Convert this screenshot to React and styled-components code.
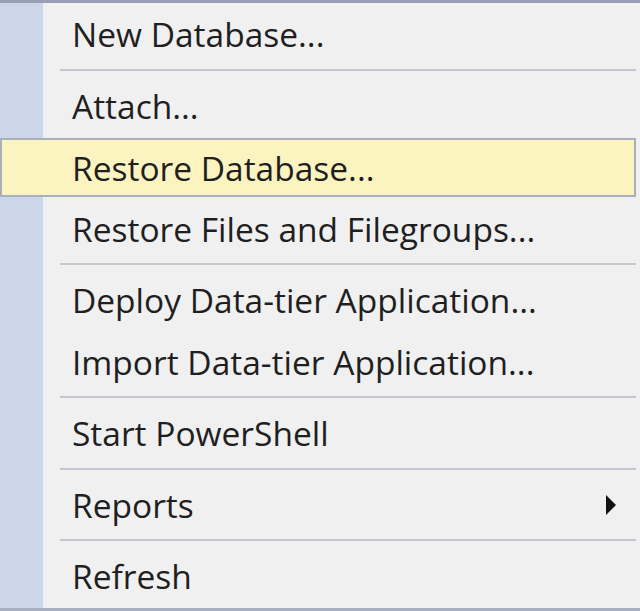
import React from 'react';
import styled, { createGlobalStyle } from 'styled-components';

const GlobalStyle = createGlobalStyle`
  html, body {
    margin: 0;
    padding: 0;
    height: 100%;
    background: #f0f0f0;
  }
  #root {
    height: 100%;
  }
`;

const Menu = styled.div`
  display: flex;
  flex-direction: column;
  height: 611px;
  box-sizing: border-box;
  border-top: 3px solid #98a1b3;
  border-bottom: 3px solid #a7aebd;
  padding-right: 4px;
  background: linear-gradient(to right, #cdd6e8 0, #cdd6e8 43px, #f0f0f0 43px);
  font-family: "Open Sans", "Noto Sans", sans-serif;
  overflow: hidden;
`;

const Item = styled.div`
  display: flex;
  align-items: center;
  height: 61.5px;
  flex-shrink: 0;
  box-sizing: border-box;
  padding-left: ${p => (p.$active ? '70px' : '72px')};
  padding-right: 19px;
  padding-top: 1px;
  font-size: 33.5px;
  color: #1f1f1f;
  ${p =>
    p.$active &&
    `
    margin: 2px 0 1px;
    height: 58.5px;
    background: #fcf4c0;
    border: 2px solid #a9afbd;
  `}
`;

const Label = styled.span`
  flex: 1;
  white-space: nowrap;
`;

const Separator = styled.div`
  flex-shrink: 0;
  height: 10px;
  margin-left: 60px;
  display: flex;
  align-items: center;

  &::after {
    content: '';
    display: block;
    width: 100%;
    height: 2px;
    background: #c2c6ce;
  }
`;

const Arrow = () => (
  <svg width="12" height="22" viewBox="0 0 12 22">
    <polygon points="1,1 11,11 1,21" fill="#111" />
  </svg>
);

const entries = [
  { label: 'New Database...' },
  { sep: true },
  { label: 'Attach...' },
  { label: 'Restore Database...', active: true },
  { label: 'Restore Files and Filegroups...' },
  { sep: true },
  { label: 'Deploy Data-tier Application...' },
  { label: 'Import Data-tier Application...' },
  { sep: true },
  { label: 'Start PowerShell' },
  { sep: true },
  { label: 'Reports', sub: true },
  { sep: true },
  { label: 'Refresh' },
];

const App = () => (
  <>
    <GlobalStyle />
    <Menu>
      {entries.map((e, i) =>
        e.sep ? (
          <Separator key={i} />
        ) : (
          <Item key={i} $active={e.active}>
            <Label>{e.label}</Label>
            {e.sub && <Arrow />}
          </Item>
        )
      )}
    </Menu>
  </>
);

export default App;
